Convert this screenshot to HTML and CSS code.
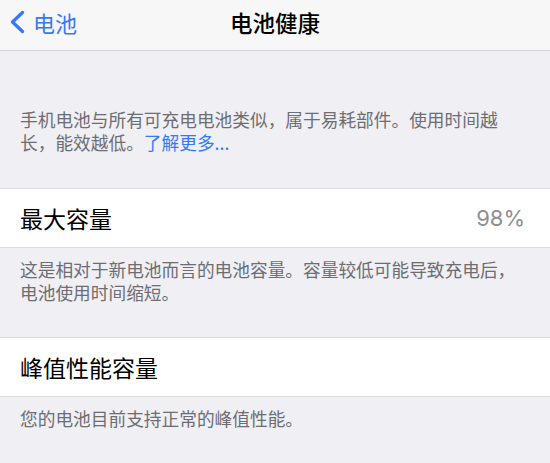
FILE: index.html
```html
<!DOCTYPE html>
<html lang="zh-CN">
<head>
  <meta charset="UTF-8" />
  <title>电池健康</title>
  <meta name="viewport" content="width=device-width, initial-scale=1.0" />
  <link rel="stylesheet" href="styles.css">
</head>
<body>
  <div id="navbar">
    <a class="back" href="#">
      <svg class="chevron" width="16" height="24" viewBox="0 0 16 24">
        <path d="M13.5 2.5 L3.5 12 L13.5 21.5" />
      </svg>
      <span>电池</span>
    </a>
    <div class="title">电池健康</div>
  </div>

  <p class="intro">手机电池与所有可充电电池类似，属于易耗部件。使用时间越长，能效越低。<a href="#">了解更多...</a></p>

  <div class="row">
    <span class="label">最大容量</span>
    <span class="value">98%</span>
  </div>
  <p class="footer">这是相对于新电池而言的电池容量。容量较低可能导致充电后，电池使用时间缩短。</p>

  <div class="row">
    <span class="label">峰值性能容量</span>
  </div>
  <p class="footer">您的电池目前支持正常的峰值性能。</p>
</body>
</html>
```

FILE: styles.css
```css
body {
  margin: 0;
  background: #efeff4;
  color: #000;
  font-family: "Noto Sans CJK SC", "Noto Sans", sans-serif;
  overflow: hidden;
}

#navbar {
  position: relative;
  height: 50px;
  background: #f7f7f8;
  border-bottom: 1px solid #d6d6da;
}

.back {
  position: absolute;
  left: 9px;
  top: 0;
  height: 44px;
  display: flex;
  align-items: center;
  gap: 8px;
  color: #3479f6;
  text-decoration: none;
  font-size: 22px;
}

.chevron path {
  fill: none;
  stroke: #3479f6;
  stroke-width: 3.3;
  stroke-linecap: round;
  stroke-linejoin: round;
}

.title {
  text-align: center;
  line-height: 44px;
  font-size: 22.5px;
  font-weight: 500;
}

.intro,
.footer {
  margin: 0;
  padding: 0 20px;
  font-size: 17.7px;
  line-height: 23px;
  color: #6d6d72;
}

.intro {
  padding-top: 57px;
  padding-bottom: 34px;
}

.intro a {
  color: #3479f6;
  text-decoration: none;
}

.footer {
  padding-top: 10px;
  padding-bottom: 33px;
}

.row {
  height: 58px;
  display: flex;
  align-items: center;
  justify-content: space-between;
  padding: 0 25px 0 20px;
  background: #fff;
  border-top: 1px solid #dcdce0;
  border-bottom: 1px solid #dcdce0;
}

.label {
  font-size: 23px;
}

.value {
  font-family: Inter, "Noto Sans", sans-serif;
  font-size: 22px;
  color: #8e8e93;
}
```
